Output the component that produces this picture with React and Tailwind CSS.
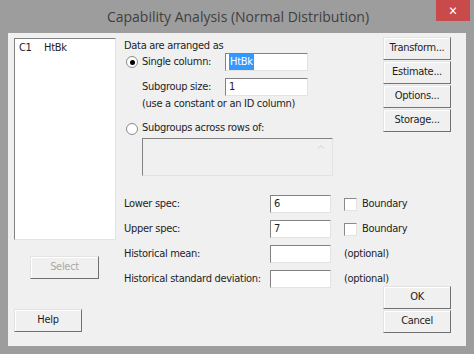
import { ChevronUp } from 'lucide-react'

const font = { fontFamily: '"DejaVu Sans Condensed", "Liberation Sans", Arial, sans-serif' }

function Boton({ children, className = '', disabled }) {
  return (
    <button
      type="button"
      className={`flex h-[23px] w-[68px] shrink-0 items-center justify-center border border-t-[#e3e3e3] border-l-[#e3e3e3] border-r-[#707070] border-b-[#707070] bg-[#f0f0f0] text-[11px] tracking-[-0.3px] shadow-[inset_1px_1px_0_#ffffff] ${disabled ? 'text-[#a8a8a8]' : 'text-[#1e1e1e]'} ${className}`}
    >
      {children}
    </button>
  )
}

function Campo({ children, className = '' }) {
  return (
    <div
      className={`flex h-[18px] shrink-0 items-center border border-t-[#828282] border-l-[#828282] border-r-[#e3e3e3] border-b-[#e3e3e3] bg-white px-[3px] text-[11px] text-[#1e1e1e] ${className}`}
    >
      {children}
    </div>
  )
}

function Radio({ checked }) {
  return (
    <span className="flex h-[12px] w-[12px] shrink-0 items-center justify-center rounded-full border border-[#8a8a8a] bg-white">
      {checked && <span className="h-[5px] w-[5px] rounded-full bg-black" />}
    </span>
  )
}

function Casilla() {
  return <span className="h-[13px] w-[13px] shrink-0 border border-t-[#8a8a8a] border-l-[#8a8a8a] border-r-[#e3e3e3] border-b-[#e3e3e3] bg-white" />
}

function FilaSpec({ label, valor, extra, checkbox }) {
  return (
    <div className="flex h-[25px] items-start">
      <span className="w-[146px] shrink-0 whitespace-nowrap pt-[1px] leading-[16px]">{label}</span>
      <Campo className="w-[61px]">{valor}</Campo>
      <div className="ml-[13px] flex shrink-0 items-center gap-[5px] whitespace-nowrap pt-[1px] leading-[16px]">
        {checkbox && <Casilla />}
        <span>{extra}</span>
      </div>
    </div>
  )
}

export default function App() {
  return (
    <div className="h-[354px] w-[474px] bg-[#9d9d9d]" style={font}>
      <div className="relative flex h-[33px] items-center justify-center">
        <span className="pl-[2px] text-[14px] text-[#404040]" style={{ fontFamily: '"Open Sans", "Noto Sans", sans-serif' }}>
          Capability Analysis (Normal Distribution)
        </span>
        <div className="absolute right-[4px] top-0 flex h-[21px] w-[34px] items-center justify-center bg-[#c94a4a] text-[12px] font-bold text-white">
          ✕
        </div>
      </div>

      <div className="mx-[8px] flex h-[313px] bg-[#f0f0f0] pl-[6px] pt-[4px] text-[11px] tracking-[-0.3px] text-[#1e1e1e]">
        <div className="flex w-[102px] shrink-0 flex-col pt-[1px]">
          <div className="h-[202px] border border-t-[#828282] border-l-[#828282] border-r-[#e3e3e3] border-b-[#e3e3e3] bg-white px-[4px] pt-[1px]">
            <div className="flex leading-[16px]">
              <span className="w-[25px]">C1</span>
              <span>HtBk</span>
            </div>
          </div>
          <Boton disabled className="ml-[16px] mt-[16px] w-[69px]">Select</Boton>
          <Boton className="mt-[30px]">Help</Boton>
        </div>

        <div className="ml-[8px] flex w-[327px] shrink-0 flex-col">
          <div className="flex">
            <div className="w-[259px] shrink-0">
              <div className="h-[16px] pt-[1px] leading-[15px]">Data are arranged as</div>
              <div className="flex h-[25px] items-start pl-[2px]">
                <span className="pt-[3px]"><Radio checked /></span>
                <span className="ml-[4px] w-[83px] shrink-0 pt-[1px] leading-[16px]">Single column:</span>
                <Campo className="w-[83px] px-[1px]">
                  <span className="bg-[#3399ff] px-[1px] text-white">HtBk</span>
                </Campo>
              </div>
              <div className="flex h-[18px] items-start pl-[18px]">
                <span className="w-[83px] shrink-0 pt-[1px] leading-[16px]">Subgroup size:</span>
                <Campo className="w-[83px]">1</Campo>
              </div>
              <div className="h-[24px] pl-[18px] leading-[16px]">(use a constant or an ID column)</div>
              <div className="flex h-[17px] items-center pl-[2px]">
                <Radio />
                <span className="ml-[4px]">Subgroups across rows of:</span>
              </div>
              <div className="relative ml-[18px] mt-[1px] h-[38px] w-[191px] border border-t-[#828282] border-l-[#828282] border-r-[#e3e3e3] border-b-[#e3e3e3] bg-[#f0f0f0]">
                <ChevronUp size={12} strokeWidth={1.5} className="absolute right-[5px] top-[2px] text-[#c8c8c8]" />
              </div>
            </div>
            <div className="flex flex-col gap-[1px]">
              <Boton>Transform...</Boton>
              <Boton>Estimate...</Boton>
              <Boton>Options...</Boton>
              <Boton>Storage...</Boton>
            </div>
          </div>

          <div className="mt-[19px]">
            <FilaSpec label="Lower spec:" valor="6" extra="Boundary" checkbox />
            <FilaSpec label="Upper spec:" valor="7" extra="Boundary" checkbox />
          </div>
          <div className="flex">
            <div className="w-[259px] shrink-0">
              <FilaSpec label="Historical mean:" extra="(optional)" />
              <FilaSpec label="Historical standard deviation:" extra="(optional)" />
            </div>
            <div className="flex flex-col gap-[1px] pt-[41px]">
              <Boton>OK</Boton>
              <Boton>Cancel</Boton>
            </div>
          </div>
        </div>
      </div>
    </div>
  )
}
